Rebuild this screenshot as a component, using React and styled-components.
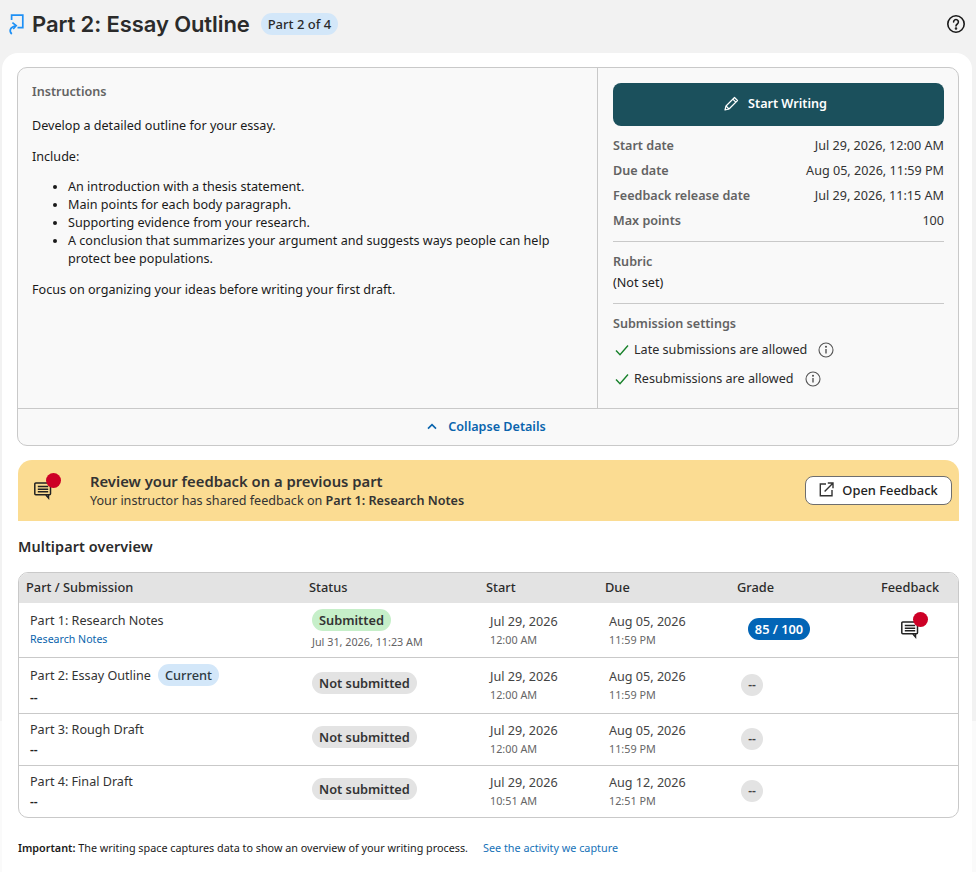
import React from 'react';
import styled, { createGlobalStyle } from 'styled-components';

const Global = createGlobalStyle`
  html, body { margin: 0; padding: 0; height: 872px; overflow: hidden; }
  body { font-family: "Noto Sans", sans-serif; color: #1f1f1f; background: #fff; }
  * { box-sizing: border-box; }
`;

const Page = styled.div`
  height: 872px;
  display: flex;
  flex-direction: column;
  background: linear-gradient(#f2f2f2 0 721px, #fafafa 721px);
`;
const Header = styled.header`
  height: 53px;
  flex: none;
  display: flex;
  align-items: center;
  padding: 0 10px 5px 8px;
  gap: 11px;
`;
const Title = styled.h1`
  margin: 0 0 0 -3px;
  font-family: "Inter", sans-serif;
  font-size: 22px;
  font-weight: 600;
  letter-spacing: -0.1px;
  color: #2b2b2b;
`;
const PartPill = styled.span`
  background: #d3e7f9;
  color: #2a2a2a;
  font-size: 13px;
  font-weight: 500;
  height: 22px;
  padding: 0 7px;
  border-radius: 11px;
  display: inline-flex;
  align-items: center;
`;
const HelpButton = styled.span`
  margin-left: auto;
  display: flex;
  color: #1a1a1a;
`;
const Card = styled.main`
  flex: 1;
  margin: 0 4px 0 2px;
  padding: 14px 13px 0 15px;
  background: #fff;
  border-radius: 16px 16px 0 0;
  display: flex;
  flex-direction: column;
`;
const Details = styled.section`
  height: 379px;
  flex: none;
  border: 1px solid #c9c9c9;
  border-radius: 10px;
  background: #f9f9f9;
  display: grid;
  grid-template-columns: 580px 1fr;
  grid-template-rows: 341px 1fr;
`;
const Instructions = styled.div`
  border-right: 1px solid #c9c9c9;
  border-bottom: 1px solid #c9c9c9;
  padding: 15px 14px 0 14px;
  font-size: 12.6px;
  line-height: 18px;
  color: #1a1a1a;
`;
const SideLabel = styled.div`
  font-size: 12.6px;
  font-weight: 600;
  line-height: 18px;
  color: #636363;
`;
const Para = styled.p`
  margin: 0 0 13px;
  &:first-of-type { margin-top: 16px; }
`;
const IncludePara = styled(Para)`
  margin-bottom: 12px;
`;
const Bullets = styled.ul`
  margin: 0 0 13px;
  padding-left: 36px;
`;
const Side = styled.aside`
  border-bottom: 1px solid #c9c9c9;
  padding: 15px 14px 0 15px;
  font-size: 12.6px;
`;
const StartButton = styled.button`
  width: 100%;
  height: 43px;
  padding: 0 6px 3px 0;
  border: 0;
  border-radius: 8px;
  background: #1b505c;
  color: #fff;
  font: 600 12.6px "Noto Sans", sans-serif;
  display: flex;
  align-items: center;
  justify-content: center;
  gap: 9px;
`;
const Facts = styled.dl`
  margin: 7px 0 0;
  display: grid;
  grid-template-columns: 1fr auto;
  grid-auto-rows: 25px;
  align-items: center;
  padding-bottom: 8px;
  border-bottom: 1px solid #c9c9c9;
`;
const FactLabel = styled.dt`
  font-weight: 600;
  color: #636363;
`;
const FactValue = styled.dd`
  margin: 0;
  text-align: right;
  color: #333;
`;
const RubricBlock = styled.div`
  padding: 11px 0 9px;
  border-bottom: 1px solid #c9c9c9;
  line-height: 23px;
  color: #222;
`;
const SettingsBlock = styled.div`
  padding-top: 11px;
`;
const SettingList = styled.div`
  margin-top: 2px;
`;
const SettingRow = styled.div`
  display: flex;
  align-items: center;
  height: 29px;
  color: #2b2b2b;
  margin-left: 1px;
  gap: 4px;
`;
const InfoMark = styled.span`
  display: flex;
  margin-left: 7px;
  color: #555;
`;
const Collapse = styled.div`
  grid-column: 1 / -1;
  display: flex;
  align-items: center;
  justify-content: center;
  gap: 11px;
  padding: 0 3px 1px 0;
  color: #0a64ad;
  font-size: 12.6px;
  font-weight: 600;
`;
const Banner = styled.section`
  margin: 14px 0 0 1px;
  height: 61px;
  flex: none;
  background: #fbdc92;
  border-radius: 14px 14px 0 0;
  display: flex;
  align-items: center;
  padding: 0 7px 0 15px;
`;
const BannerIcon = styled.span`
  position: relative;
  width: 22px;
  height: 24px;
  display: flex;
  align-items: flex-end;
  flex: none;
  margin-top: -6px;
`;
const RedDot = styled.span`
  position: absolute;
  right: ${p => p.$right}px;
  top: ${p => p.$top}px;
  width: 15px;
  height: 15px;
  border-radius: 50%;
  background: #cd0026;
`;
const BannerText = styled.div`
  margin-left: 35px;
  flex: 1;
  color: #333;
  font-size: 12.6px;
  line-height: 17px;
  b { font-weight: 600; }
`;
const BannerTitle = styled.div`
  font-size: 14.8px;
  font-weight: 600;
  line-height: 20px;
  margin: -1px 0 1px;
`;
const FeedbackButton = styled.button`
  width: 147px;
  height: 29px;
  padding: 0 0 2px;
  background: #fff;
  border: 1px solid #6e6e6e;
  border-radius: 8px;
  color: #222;
  font: 500 12.9px "Noto Sans", sans-serif;
  display: flex;
  align-items: center;
  justify-content: center;
  gap: 8px;
`;
const SectionTitle = styled.h2`
  margin: 16px 0 0 1px;
  height: 20px;
  font-size: 14.4px;
  line-height: 20px;
  font-weight: 600;
  letter-spacing: 0.1px;
  color: #2b2b2b;
`;
const Table = styled.section`
  margin: 15px 0 0 1px;
  width: 941px;
  border: 1px solid #c9c9c9;
  border-radius: 10px;
  overflow: hidden;
  flex: none;
`;
const cols = '283px 177px 119px 132px 144px 84px';
const HeadRow = styled.div`
  display: grid;
  grid-template-columns: ${cols};
  height: 30px;
  padding-bottom: 2px;
  align-items: center;
  background: #e3e3e3;
  font-size: 12.8px;
  font-weight: 500;
  color: #2b2b2b;
`;
const HeadCell = styled.div`
  padding-left: 7px;
`;
const Row = styled.div`
  display: grid;
  grid-template-columns: ${cols};
  height: ${p => p.$h}px;
  border-top: ${p => (p.$first ? 0 : '1px solid #c9c9c9')};
  font-size: 12.6px;
`;
const PartCell = styled.div`
  padding: ${p => p.$top}px 0 0 11px;
  color: #333;
`;
const PartName = styled.div`
  display: flex;
  align-items: center;
  height: 20px;
  gap: 7px;
`;
const CurrentPill = styled.span`
  background: #d3e7f9;
  color: #2f3a42;
  font-size: 12.8px;
  font-weight: 500;
  height: 22px;
  display: inline-flex;
  align-items: center;
  padding: 0 7px;
  border-radius: 11px;
`;
const SubLink = styled.a`
  display: block;
  font-size: 10.6px;
  line-height: 16px;
  margin-top: 1px;
  color: #0a64ad;
`;
const Dashes = styled.div`
  font-size: 12px;
  line-height: 18px;
  margin-top: ${p => p.$mt}px;
  color: #222;
  font-weight: 600;
`;
const StatusCell = styled.div`
  display: flex;
  flex-direction: column;
  align-items: flex-start;
  justify-content: ${p => (p.$top ? 'flex-start' : 'center')};
  padding: ${p => (p.$top ? '6px 0 0' : '0 0 6px')} 10px;
`;
const StatusPill = styled.span`
  background: ${p => (p.$done ? '#c6efc9' : '#e3e3e3')};
  color: #333;
  font-size: 12.8px;
  font-weight: 600;
  height: 22px;
  padding: 0 7px;
  display: inline-flex;
  align-items: center;
  border-radius: 11px;
`;
const Stamp = styled.div`
  font-size: 10.8px;
  line-height: 15px;
  margin-top: 3px;
  color: #636363;
`;
const DateCell = styled.div`
  padding: 0 0 0 11px;
  display: flex;
  flex-direction: column;
  justify-content: center;
`;
const DateMain = styled.div`
  color: #444;
  line-height: 18px;
`;
const DateTime = styled.div`
  color: #666;
  font-size: 10.8px;
  line-height: 17px;
`;
const GradeCell = styled.div`
  padding-left: 18px;
  display: flex;
  align-items: center;
  margin-top: -2px;
`;
const GradePill = styled.span`
  background: #0265b6;
  color: #fff;
  font-size: 12.8px;
  font-weight: 600;
  height: 22px;
  width: 62px;
  display: inline-flex;
  align-items: center;
  justify-content: center;
  border-radius: 11px;
`;
const EmptyGrade = styled.span`
  background: #e3e3e3;
  color: #444;
  font-size: 12px;
  font-weight: 600;
  height: 22px;
  width: 22px;
  display: inline-flex;
  align-items: center;
  justify-content: center;
  border-radius: 50%;
  margin-left: -7px;
`;
const FeedbackCell = styled.div`
  display: flex;
  justify-content: center;
  padding: 14px 10px 0 0;
`;
const FeedbackIcon = styled.span`
  position: relative;
  width: 22px;
  height: 22px;
  display: flex;
  align-items: flex-end;
`;
const Footnote = styled.p`
  margin: 22px 0 0 1px;
  font-size: 10.8px;
  line-height: 15px;
  color: #1a1a1a;
  display: flex;
  white-space: pre;
  b { font-weight: 600; }
`;
const FootLink = styled.a`
  margin-left: 15px;
  color: #1672b8;
`;

const Chat = () => (
  <svg width="20" height="20" viewBox="0 0 20 20" fill="none" stroke="#222" strokeWidth="1.5">
    <path d="M3.5 3.5h13a1 1 0 0 1 1 1v9.8a1 1 0 0 1-1 1H2.8a1 1 0 0 1-1-1V4.5a1 1 0 0 1 1-1z" transform="translate(0 -.5)" />
    <path d="M15.5 15v3l-2.6-3" />
    <path d="M4.8 6.6h10.4M4.8 9.2h10.4M4.8 11.8h10.4" />
  </svg>
);

const LogoIcon = () => (
  <svg width="16" height="21" viewBox="0 0 16 21" fill="none" stroke="#1e90f5" strokeWidth="1.7" style={{ flex: 'none' }}>
    <path d="M3.6 6V1.2h11.2v12.4H9.5" />
    <path d="M3.8 20c-2.6-2.2-2.5-6.8 3.8-8.2" />
    <path d="M4.4 8.6l3.8 3.1-3 3.3" />
  </svg>
);

const Help = () => (
  <svg width="20" height="20" viewBox="0 0 20 20" fill="none" stroke="currentColor" strokeWidth="1.6" strokeLinecap="round">
    <circle cx="10" cy="10" r="8.2" />
    <path d="M7.6 8a2.4 2.4 0 1 1 3.7 2c-.9.6-1.3 1-1.3 2" />
    <circle cx="10" cy="14.5" r=".5" fill="currentColor" />
  </svg>
);

const Pencil = () => (
  <svg width="15" height="15" viewBox="0 0 15 15" fill="none" stroke="#fff" strokeWidth="1.2" strokeLinejoin="round">
    <path d="M1 14l1-4L10.5 1.5l3 3L5 13z" />
    <path d="M8.8 3.2l3 3M2 10l3 3" />
  </svg>
);

const Check = () => (
  <svg width="16" height="16" viewBox="0 0 16 16" fill="none" stroke="#17812a" strokeWidth="1.4">
    <path d="M2 8.5l4 4.2 8-9.2" />
  </svg>
);

const Info = () => (
  <svg width="16" height="16" viewBox="0 0 16 16" fill="none" stroke="currentColor" strokeWidth="1.1">
    <circle cx="8" cy="8" r="7" />
    <path d="M8 7v4.4" strokeWidth="1.4" />
    <circle cx="8" cy="4.8" r=".5" fill="currentColor" />
  </svg>
);

const Chevron = () => (
  <svg width="10" height="7" viewBox="0 0 10 7" fill="none" stroke="#0a64ad" strokeWidth="1.6">
    <path d="M1 5.6L5 1.6l4 4" />
  </svg>
);

const External = () => (
  <svg width="15" height="15" viewBox="0 0 15 15" fill="none" stroke="#333" strokeWidth="1.4">
    <path d="M7 2H1.3v11.7H13V8" />
    <path d="M5.6 9.4L13.6 1.4M8.8 1h5.2v5.2" />
  </svg>
);

const rows = [
  { name: 'Part 2: Essay Outline', current: true, h: 56, top: 7, mt: 4, start: 'Jul 29, 2026', st: '12:00 AM', due: 'Aug 05, 2026', dt: '11:59 PM' },
  { name: 'Part 3: Rough Draft', h: 52, top: 5, mt: 2, start: 'Jul 29, 2026', st: '12:00 AM', due: 'Aug 05, 2026', dt: '11:59 PM' },
  { name: 'Part 4: Final Draft', h: 52, top: 5, mt: 2, start: 'Jul 29, 2026', st: '10:51 AM', due: 'Aug 12, 2026', dt: '12:51 PM' },
];

export default function App() {
  return (
    <>
      <Global />
      <Page>
        <Header>
          <LogoIcon />
          <Title>Part 2: Essay Outline</Title>
          <PartPill>Part 2 of 4</PartPill>
          <HelpButton><Help /></HelpButton>
        </Header>
        <Card>
          <Details>
            <Instructions>
              <SideLabel>Instructions</SideLabel>
              <Para>Develop a detailed outline for your essay.</Para>
              <IncludePara>Include:</IncludePara>
              <Bullets>
                <li>An introduction with a thesis statement.</li>
                <li>Main points for each body paragraph.</li>
                <li>Supporting evidence from your research.</li>
                <li>A conclusion that summarizes your argument and suggests ways people can help protect bee populations.</li>
              </Bullets>
              <Para>Focus on organizing your ideas before writing your first draft.</Para>
            </Instructions>
            <Side>
              <StartButton><Pencil />Start Writing</StartButton>
              <Facts>
                <FactLabel>Start date</FactLabel><FactValue>Jul 29, 2026, 12:00 AM</FactValue>
                <FactLabel>Due date</FactLabel><FactValue>Aug 05, 2026, 11:59 PM</FactValue>
                <FactLabel>Feedback release date</FactLabel><FactValue>Jul 29, 2026, 11:15 AM</FactValue>
                <FactLabel>Max points</FactLabel><FactValue>100</FactValue>
              </Facts>
              <RubricBlock>
                <SideLabel>Rubric</SideLabel>
                (Not set)
              </RubricBlock>
              <SettingsBlock>
                <SideLabel>Submission settings</SideLabel>
                <SettingList>
                  <SettingRow><Check />Late submissions are allowed<InfoMark><Info /></InfoMark></SettingRow>
                  <SettingRow><Check />Resubmissions are allowed<InfoMark><Info /></InfoMark></SettingRow>
                </SettingList>
              </SettingsBlock>
            </Side>
            <Collapse><Chevron />Collapse Details</Collapse>
          </Details>

          <Banner>
            <BannerIcon><Chat /><RedDot $right={-6} $top={-3} /></BannerIcon>
            <BannerText>
              <BannerTitle>Review your feedback on a previous part</BannerTitle>
              Your instructor has shared feedback on <b>Part 1: Research Notes</b>
            </BannerText>
            <FeedbackButton><External />Open Feedback</FeedbackButton>
          </Banner>

          <SectionTitle>Multipart overview</SectionTitle>

          <Table>
            <HeadRow>
              <HeadCell>Part / Submission</HeadCell>
              <HeadCell>Status</HeadCell>
              <HeadCell>Start</HeadCell>
              <HeadCell>Due</HeadCell>
              <HeadCell>Grade</HeadCell>
              <HeadCell>Feedback</HeadCell>
            </HeadRow>
            <Row $h={54} $first>
              <PartCell $top={7}>
                <PartName>Part 1: Research Notes</PartName>
                <SubLink>Research Notes</SubLink>
              </PartCell>
              <StatusCell $top>
                <StatusPill $done>Submitted</StatusPill>
                <Stamp>Jul 31, 2026, 11:23 AM</Stamp>
              </StatusCell>
              <DateCell><DateMain>Jul 29, 2026</DateMain><DateTime>12:00 AM</DateTime></DateCell>
              <DateCell><DateMain>Aug 05, 2026</DateMain><DateTime>11:59 PM</DateTime></DateCell>
              <GradeCell><GradePill>85 / 100</GradePill></GradeCell>
              <FeedbackCell>
                <FeedbackIcon><Chat /><RedDot $right={-6} $top={-5} /></FeedbackIcon>
              </FeedbackCell>
            </Row>
            {rows.map(r => (
              <Row key={r.name} $h={r.h}>
                <PartCell $top={r.top}>
                  <PartName>{r.name}{r.current && <CurrentPill>Current</CurrentPill>}</PartName>
                  <Dashes $mt={r.mt}>--</Dashes>
                </PartCell>
                <StatusCell><StatusPill>Not submitted</StatusPill></StatusCell>
                <DateCell><DateMain>{r.start}</DateMain><DateTime>{r.st}</DateTime></DateCell>
                <DateCell><DateMain>{r.due}</DateMain><DateTime>{r.dt}</DateTime></DateCell>
                <GradeCell><EmptyGrade>--</EmptyGrade></GradeCell>
                <div />
              </Row>
            ))}
          </Table>
          <Footnote>
            <b>Important: </b>The writing space captures data to show an overview of your writing process.
            <FootLink>See the activity we capture</FootLink>
          </Footnote>
        </Card>
      </Page>
    </>
  );
}
